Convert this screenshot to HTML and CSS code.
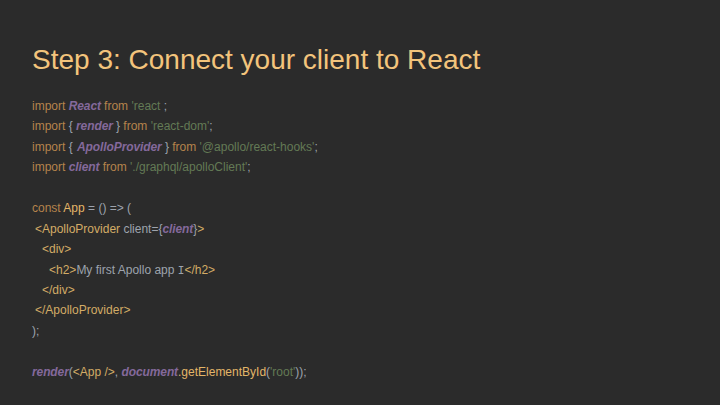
FILE: index.html
```html
<!DOCTYPE html>
<html lang="en">
<head>
<meta charset="utf-8">
<title>Step 3: Connect your client to React</title>
<link rel="stylesheet" href="styles.css">
</head>
<body>
<main class="slide">
<h1 class="title">Step 3: Connect your client to React</h1>
<div class="code">
<p class="line"><span class="kw">import </span><span class="id">React </span><span class="kw">from </span><span class="str">'react </span><span class="pn">;</span></p>
<p class="line"><span class="kw">import </span><span class="pn">{ </span><span class="id">render </span><span class="pn">} </span><span class="kw">from </span><span class="str">'react-dom'</span><span class="pn">;</span></p>
<p class="line"><span class="kw">import </span><span class="pn">{ </span><span class="id lead">ApolloProvider </span><span class="pn">} </span><span class="kw">from </span><span class="str">'@apollo/react-hooks'</span><span class="pn">;</span></p>
<p class="line"><span class="kw">import </span><span class="id">client </span><span class="kw">from </span><span class="str">'./graphql/apolloClient'</span><span class="pn">;</span></p>
<p class="line"></p>
<p class="line"><span class="kw">const </span><span class="fn">App </span><span class="pn">= () =&gt; (</span></p>
<p class="line in1"><span class="tag">&lt;ApolloProvider </span><span class="pn">client={</span><span class="id">client</span><span class="pn">}</span><span class="tag">&gt;</span></p>
<p class="line in2"><span class="tag">&lt;div&gt;</span></p>
<p class="line in3"><span class="tag">&lt;h2&gt;</span><span class="pn">My first Apollo app </span><span class="glyph">I</span><span class="tag">&lt;/h2&gt;</span></p>
<p class="line in2"><span class="tag">&lt;/div&gt;</span></p>
<p class="line in1"><span class="tag">&lt;/ApolloProvider&gt;</span></p>
<p class="line"><span class="pn">);</span></p>
<p class="line"></p>
<p class="line"><span class="id">render</span><span class="pn">(</span><span class="tag">&lt;App /&gt;</span><span class="pn">, </span><span class="id">document</span><span class="fn">.getElementById</span><span class="pn">(</span><span class="str">'root'</span><span class="pn">));</span></p>
</div>
</main>
</body>
</html>
```
FILE: styles.css
```css
html, body {
  margin: 0;
  padding: 0;
  background: #2b2b2b;
}
.slide {
  width: 720px;
  height: 405px;
  box-sizing: border-box;
  padding: 43px 32px 0;
  overflow: hidden;
  background: #2b2b2b;
  font-family: "Liberation Sans", Arial, sans-serif;
}
.title {
  margin: 0 0 19px;
  font-size: 28px;
  line-height: 34px;
  font-weight: 400;
  color: #f3c47c;
}
.code {
  font-size: 12px;
  color: #9da3ad;
}
.line {
  margin: 0;
  height: 20.45px;
  line-height: 20.45px;
  white-space: pre;
}
.in1 { padding-left: 3px; }
.in2 { padding-left: 10px; }
.in3 { padding-left: 17px; }
.kw { color: #b5834c; }
.id { color: #84699b; font-weight: 700; font-style: italic; letter-spacing: -0.1px; }
.lead { padding-left: 1px; }
.str { color: #637a55; }
.fn { color: #e3b568; }
.tag { color: #d3ac66; }
.pn { color: #9da3ad; }
.glyph { color: #9da3ad; font-family: "DejaVu Sans Mono", monospace; font-size: 11px; }
```
